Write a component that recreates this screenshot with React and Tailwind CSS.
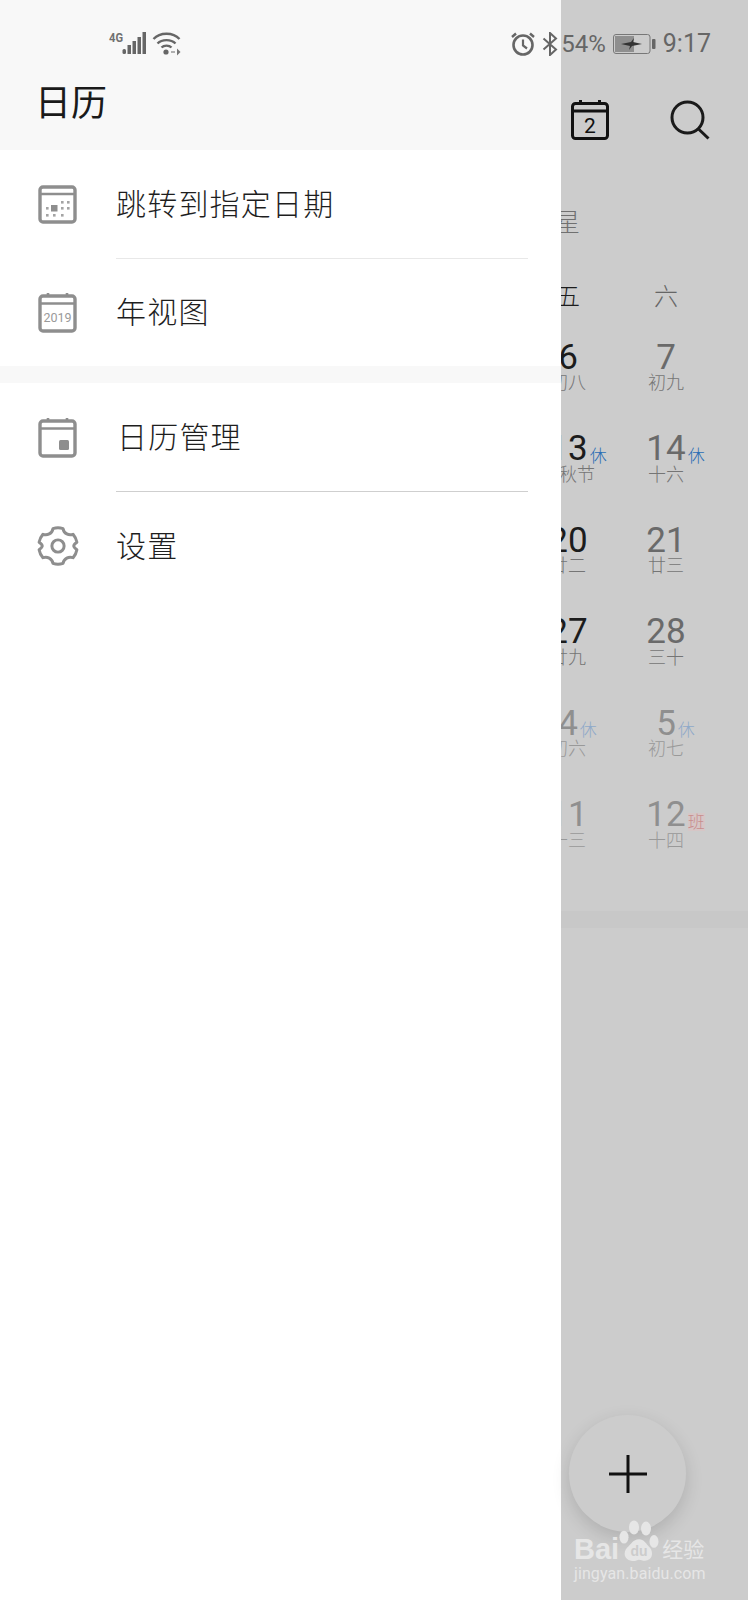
const cjk = "font-['Roboto','Noto_Sans_CJK_SC',sans-serif]";

const weeks = [
  { a: "6", aSub: "初八", b: "7", bSub: "初九" },
  { a: "13", aSub: "中秋节", aTag: "休", b: "14", bSub: "十六", bTag: "休" },
  { a: "20", aSub: "廿二", b: "21", bSub: "廿三" },
  { a: "27", aSub: "廿九", b: "28", bSub: "三十" },
  { a: "4", aSub: "初六", aTag: "休", b: "5", bSub: "初七", bTag: "休", faded: true },
  { a: "11", aSub: "十三", b: "12", bSub: "十四", bTag: "班", faded: true },
];

function DayCell({ num, sub, tag, dark, faded }) {
  const numColor = faded ? "text-[#8f8f8f]" : dark ? "text-[#1c1c1c]" : "text-[#6a6a6a]";
  const subColor = faded ? "text-[#999999]" : "text-[#757575]";
  const tagColor =
    tag === "班"
      ? "text-[#c98d8d] bg-[#d6c6c6]"
      : faded
        ? "text-[#8fa9c9]"
        : "text-[#2a6db5]";
  return (
    <div className="flex w-[98px] flex-col items-center">
      <div className={`relative h-[31.5px] text-[35px] leading-[31.5px] ${numColor}`}>
        {num}
        {tag && (
          <span className={`absolute bottom-0 left-full ml-[2px] text-[17px] font-light leading-[18px] ${tagColor}`}>
            {tag}
          </span>
        )}
      </div>
      <div className={`text-[18px] font-light leading-[20px] ${subColor}`}>{sub}</div>
    </div>
  );
}

function JumpIcon() {
  return (
    <svg width="40" height="40" viewBox="0 0 40 40" fill="none">
      <rect x="2" y="2" width="35" height="35" rx="3" stroke="#8e8e8e" strokeWidth="3.4" />
      <path d="M2 9h35" stroke="#8e8e8e" strokeWidth="2.6" />
      <rect x="13" y="20" width="6.5" height="6.5" fill="#8e8e8e" />
      <g fill="#a4a4a4">
        <rect x="23" y="16" width="2.6" height="2.6" />
        <rect x="29" y="16" width="2.6" height="2.6" />
        <rect x="8" y="22" width="2.6" height="2.6" />
        <rect x="23" y="22" width="2.6" height="2.6" />
        <rect x="29" y="22" width="2.6" height="2.6" />
        <rect x="8" y="29" width="2.6" height="2.6" />
        <rect x="15" y="29" width="2.6" height="2.6" />
        <rect x="23" y="29" width="2.6" height="2.6" />
      </g>
    </svg>
  );
}

function YearIcon() {
  return (
    <svg width="40" height="42" viewBox="0 0 40 42" fill="none">
      <rect x="2" y="4" width="35" height="35" rx="3" stroke="#8e8e8e" strokeWidth="3.4" />
      <path d="M2 11.5h35" stroke="#8e8e8e" strokeWidth="2.6" />
      <path d="M10 1v4M29 1v4" stroke="#8e8e8e" strokeWidth="2.6" />
      <text x="19.5" y="29.5" textAnchor="middle" fontFamily="Roboto" fontSize="12.5" fill="#9a9a9a">
        2019
      </text>
    </svg>
  );
}

function ManageIcon() {
  return (
    <svg width="40" height="42" viewBox="0 0 40 42" fill="none">
      <rect x="2" y="4" width="35" height="35" rx="3" stroke="#8e8e8e" strokeWidth="3.4" />
      <path d="M2 11.5h35" stroke="#8e8e8e" strokeWidth="2.6" />
      <path d="M10 1v4M29 1v4" stroke="#8e8e8e" strokeWidth="2.6" />
      <rect x="21" y="23" width="10" height="10" rx="1.5" fill="#8e8e8e" />
    </svg>
  );
}

function GearIcon() {
  return (
    <svg width="42" height="44" viewBox="0 0 24 24" fill="none" stroke="#8e8e8e" strokeWidth="1.7" strokeLinejoin="round" className="-ml-[1px]">
      <path d="M12 1.6c1 0 2 .2 2.9.5.2 1.4 1 2.4 2.1 3 1.100.6 2.400.7 3.600.2 1.100 1.300 1.900 2.900 2.200 4.600-1.100.8-1.800 1.800-1.800 2.100 0 .3.700 1.300 1.800 2.100-.3 1.700-1.100 3.300-2.200 4.600-1.200-.5-2.500-.4-3.600.2-1.100.6-1.900 1.600-2.100 3-.9.3-1.900.5-2.900.5s-2-.2-2.900-.5c-.2-1.400-1-2.400-2.100-3-1.100-.6-2.400-.7-3.600-.2C2.300 17.400 1.500 15.800 1.200 14.100 2.300 13.300 3 12.300 3 12s-.7-1.300-1.800-2.100c.3-1.700 1.100-3.300 2.200-4.600 1.200.5 2.500.4 3.600-.2 1.100-.6 1.900-1.600 2.100-3 .9-.3 1.900-.5 2.900-.5z" />
      <circle cx="12" cy="12" r="3.500" />
    </svg>
  );
}

function MenuRow({ icon, label, divider, height, textOffset }) {
  return (
    <div className={`relative flex items-center pl-[38px] ${height}`}>
      <div className="flex w-[78px] shrink-0 items-center">{icon}</div>
      <span className={`text-[30px] font-light leading-[40px] tracking-[1.2px] text-[#1e1e1e] ${textOffset || ""}`}>
        {label}
      </span>
      {divider && <div className={`absolute bottom-0 left-[116px] right-[33px] h-px ${divider}`} />}
    </div>
  );
}

function SignalIcons() {
  return (
    <svg width="74" height="26" viewBox="0 0 74 26" fill="none">
      <text x="1" y="10.500" fontFamily="Roboto" fontWeight="700" fontSize="13" fill="#707070" textLength="14" lengthAdjust="spacingAndGlyphs">
        4G
      </text>
      <g fill="#666666">
        <rect x="14.500" y="18" width="3.500" height="5" rx="1.500" />
        <rect x="19.500" y="14" width="3.500" height="9" />
        <rect x="24.500" y="10" width="3.500" height="13" />
        <rect x="29.500" y="6" width="3.500" height="17" />
        <rect x="34.500" y="1" width="3.500" height="22" />
      </g>
      <g stroke="#666666" strokeWidth="2.400" fill="none">
        <path d="M45.500 8C52 1 65 1 71.500 8" />
        <path d="M49.500 12.500C54 8 63 8 67.500 12.500" />
        <path d="M53.500 16.500C56 14 61 14 63.500 16.500" />
      </g>
      <circle cx="58" cy="21" r="2.600" fill="#666666" />
      <path d="M63 21h4" stroke="#b0b0b0" strokeWidth="2" />
      <path d="M69 17.500v7l3.500-3.500z" fill="#777777" />
    </svg>
  );
}

function AlarmIcon() {
  return (
    <svg width="26" height="26" viewBox="0 0 26 26" fill="none" stroke="#666666">
      <circle cx="13" cy="14" r="9.500" strokeWidth="2.600" />
      <path d="M13 8.500V14.500l4 3" strokeWidth="2.200" />
      <path d="M2 6l4-3.500M24 6l-4-3.500" strokeWidth="2.400" />
    </svg>
  );
}

function BluetoothIcon() {
  return (
    <svg width="16" height="24" viewBox="0 0 16 24" fill="none" stroke="#666666" strokeWidth="2">
      <path d="M1.500 6.500L14 17.500 8 23V1l6 5.500L1.500 17.500" />
    </svg>
  );
}

function BatteryIcon() {
  return (
    <svg width="43" height="21" viewBox="0 0 43 21" fill="none" className="ml-[7px]">
      <rect x="0.5" y="0.5" width="36.500" height="19" rx="2.500" stroke="#777777" />
      <rect x="2" y="2" width="19" height="16" fill="#8f8f8f" />
      <path d="M8 10l10-2 3-4-1 4 9 2-10 2-3 4 1-4z" fill="#333333" />
      <rect x="39" y="5" width="3.500" height="10" rx="1" fill="#666666" />
    </svg>
  );
}

function TodayIcon() {
  return (
    <svg width="38" height="40" viewBox="0 0 38 40" fill="none">
      <rect x="1.5" y="3.5" width="35" height="35" rx="3" stroke="#111111" strokeWidth="3" />
      <path d="M1.500 11h35" stroke="#111111" strokeWidth="3" />
      <path d="M9.500 0v4M28.500 0v4" stroke="#111111" strokeWidth="3" />
      <text x="19" y="33" textAnchor="middle" fontFamily="Roboto" fontSize="21" fill="#111111">
        2
      </text>
    </svg>
  );
}

function SearchIcon() {
  return (
    <svg width="40" height="40" viewBox="0 0 40 40" fill="none" stroke="#1a1a1a" strokeWidth="3">
      <circle cx="17.5" cy="17.5" r="15.5" />
      <path d="M28 28.500l10.500 10" />
    </svg>
  );
}

function PawIcon() {
  return (
    <svg width="40" height="45" viewBox="0 0 40 42" preserveAspectRatio="none" fill="#e6e6e6">
      <ellipse cx="15" cy="7" rx="5" ry="6.500" />
      <ellipse cx="27" cy="8" rx="5" ry="6.500" />
      <ellipse cx="5" cy="16" rx="4.500" ry="6" />
      <ellipse cx="35" cy="20" rx="4.500" ry="6" />
      <path d="M20 18c5 0 7 4 11 8 4 5 2 12-5 12-3 0-4-1-6-1s-4 2-8 1c-7-1-8-8-4-12 4-3 6-8 12-8z" />
      <text x="20" y="34" textAnchor="middle" fontFamily="Liberation Sans" fontWeight="700" fontSize="14" fill="#cccccc">
        du
      </text>
    </svg>
  );
}

export default function App() {
  return (
    <div className={`relative flex h-[1600px] w-[748px] overflow-hidden bg-white ${cjk}`}>
      {/* drawer */}
      <div className="w-[561px] shrink-0">
        <div className="h-[150px] bg-[#f8f8f8] pl-[35px] pt-[81px] text-[36px] leading-[46px] text-[#1a1a1a]">
          日历
        </div>
        <MenuRow icon={<JumpIcon />} label="跳转到指定日期" divider="bg-[#e8e8e8]" height="h-[109px]" />
        <MenuRow icon={<YearIcon />} label="年视图" height="h-[107px]" />
        <div className="h-[17px] bg-[#f8f8f8]" />
        <MenuRow icon={<ManageIcon />} label="日历管理" divider="bg-[#cfcfcf]" height="h-[109px]" textOffset="ml-[1px]" />
        <MenuRow icon={<GearIcon />} label="设置" height="h-[107px]" textOffset="mt-[3px]" />
      </div>

      {/* calendar behind the drawer */}
      <div className="flex flex-1 flex-col overflow-hidden bg-[#cccccc]">
        <div className="flex items-center gap-[61px] pl-[10px] pt-[100px]">
          <TodayIcon />
          <SearchIcon />
        </div>
        <div className="-ml-[6px] mt-[65px] h-[36px] text-[25px] font-light leading-[36px] text-[#707070]">星</div>
        <div className="-ml-[42px] mt-[39px] flex h-[34px] items-center text-[24px] font-light leading-[34px]">
          <div className="w-[98px] text-center text-[#1c1c1c]">五</div>
          <div className="w-[98px] text-center text-[#666666]">六</div>
        </div>
        <div className="-ml-[42px] mt-[27.5px] flex flex-col gap-[40px]">
          {weeks.map((w) => (
            <div key={w.a} className="flex">
              <DayCell num={w.a} sub={w.aSub} tag={w.aTag} dark faded={w.faded} />
              <DayCell num={w.b} sub={w.bSub} tag={w.bTag} faded={w.faded} />
            </div>
          ))}
        </div>
        <div className="mt-[60px] h-[17px] shrink-0 bg-[#c8c8c8]" />
      </div>

      {/* status bar */}
      <div className="absolute inset-x-0 top-0 flex items-center justify-between pl-[108px] pr-[37px] pt-[30px]">
        <SignalIcons />
        <div className="flex items-center text-[#666666]">
          <AlarmIcon />
          <div className="ml-[6px]">
            <BluetoothIcon />
          </div>
          <span className="ml-[3px] text-[24px] leading-[28px]">54%</span>
          <BatteryIcon />
          <span className="ml-[7px] text-[25px] leading-[28px]">9:17</span>
        </div>
      </div>

      {/* add button */}
      <div className="absolute left-[569px] top-[1415px] flex h-[117px] w-[117px] items-center justify-center rounded-full bg-[#cccccc] shadow-[0_6px_18px_rgba(0,0,0,0.14)]">
        <svg width="38" height="38" viewBox="0 0 38 38" stroke="#111111" strokeWidth="3">
          <path d="M19 0v38M0 19h38" />
        </svg>
      </div>

      {/* watermark */}
      <div className="absolute left-[574px] top-[1512px] flex w-[134px] flex-col text-[#e6e6e6]">
        <div className="flex h-[53px] items-end">
          <span className="font-['Liberation_Sans',sans-serif] text-[29px] font-bold leading-[32px]">Bai</span>
          <PawIcon />
          <span className="ml-[3px] text-[21px] leading-[30px]">经验</span>
        </div>
        <div className="-mt-[1px] whitespace-nowrap text-[16px] leading-[20px] tracking-[0.1px]">jingyan.baidu.com</div>
      </div>
    </div>
  );
}
